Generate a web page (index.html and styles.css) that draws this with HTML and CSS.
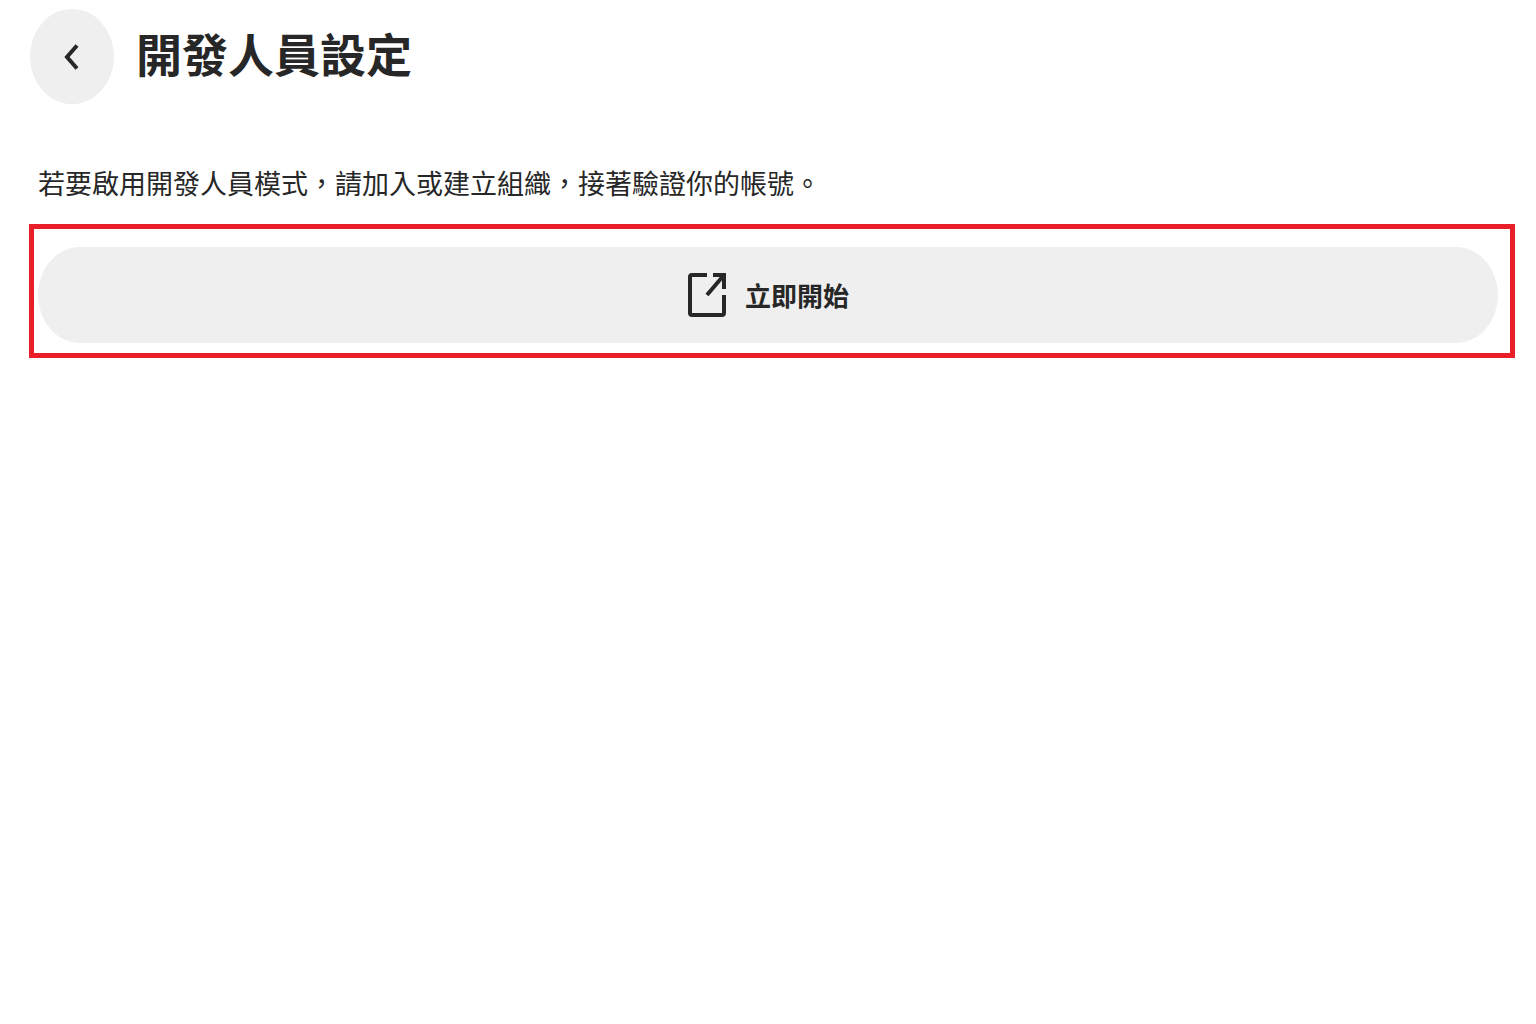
FILE: index.html
```html
<!DOCTYPE html>
<html lang="zh-Hant">
<head>
<meta charset="utf-8">
<meta name="viewport" content="width=device-width, initial-scale=1">
<title>開發人員設定</title>
<link rel="stylesheet" href="styles.css">
</head>
<body>
<header class="header">
  <button class="back" type="button" aria-label="返回">
    <svg class="back-icon" viewBox="0 0 16 26" aria-hidden="true"><path d="M13 1.500 3 13l10 11.500"/></svg>
  </button>
  <h1 class="title">開發人員設定</h1>
</header>
<main class="content">
  <p class="intro">若要啟用開發人員模式，請加入或建立組織，接著驗證你的帳號。</p>
  <div class="highlight">
    <button class="start" type="button">
      <svg class="start-icon" viewBox="0 0 40 46" aria-hidden="true"><path d="M20 3H5Q3 3 3 5V41Q3 43 5 43H35Q37 43 37 41V23M26 3H37V17M37 3 20 23"/></svg>
      <span>立即開始</span>
    </button>
  </div>
</main>
</body>
</html>
```
FILE: styles.css
```css
* {
  box-sizing: border-box;
}

body {
  margin: 0;
  background: #fff;
  color: #272727;
  font-family: "Noto Sans CJK TC", sans-serif;
}

.header {
  display: flex;
  align-items: center;
  gap: 22px;
  padding: 9px 30px 0;
}

.back {
  display: flex;
  align-items: center;
  justify-content: center;
  width: 84px;
  height: 95px;
  padding: 0;
  border: 0;
  border-radius: 50%;
  background: #efefef;
  color: inherit;
}

.back-icon {
  width: 16px;
  height: 26px;
  fill: none;
  stroke: currentColor;
  stroke-width: 4;
}

.title {
  margin: 0;
  padding-bottom: 10px;
  font-size: 46px;
  line-height: 64px;
  font-weight: 700;
}

.content {
  padding: 59px 21px 0 29px;
}

.intro {
  margin: 0 0 21px;
  padding-left: 9px;
  font-size: 27px;
  line-height: 40px;
}

.highlight {
  padding: 18px 12px 10px 4px;
  border: 5px solid #e81f27;
}

.start {
  display: flex;
  align-items: center;
  justify-content: center;
  gap: 18px;
  width: 100%;
  height: 96px;
  padding: 0;
  border: 0;
  border-radius: 42px / 48px;
  background: #efefef;
  color: inherit;
  font-family: inherit;
  font-size: 26px;
  line-height: 40px;
  font-weight: 700;
}

.start-icon {
  width: 40px;
  height: 46px;
  fill: none;
  stroke: currentColor;
  stroke-width: 4;
}
```
